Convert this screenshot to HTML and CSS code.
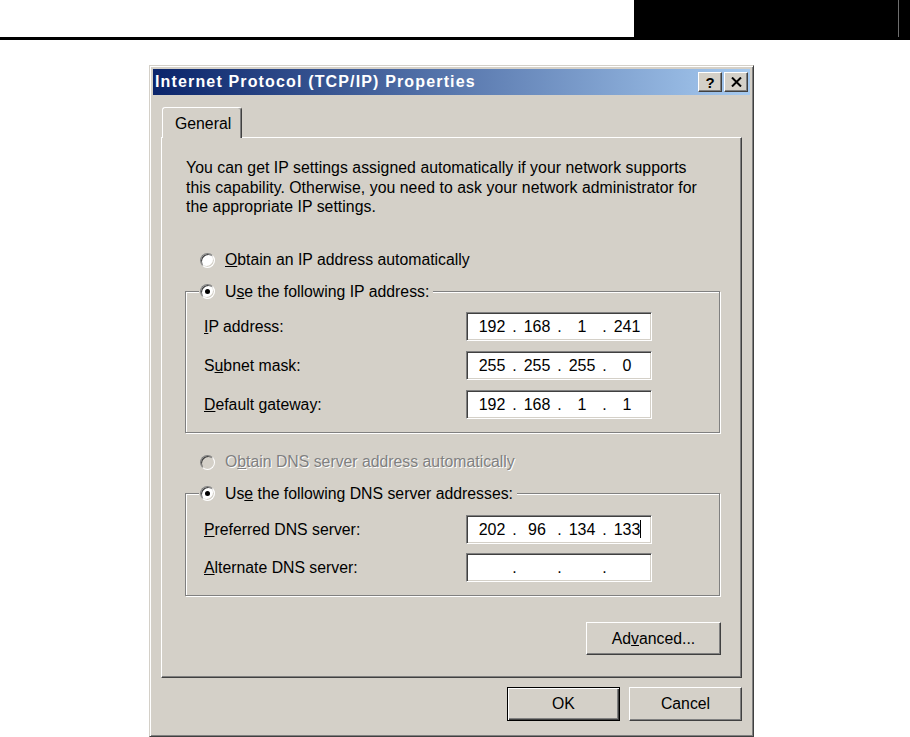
FILE: index.html
```html
<!DOCTYPE html>
<html lang="en">
<head>
  <meta charset="UTF-8">
  <title>Internet Protocol (TCP/IP) Properties</title>
  <link rel="stylesheet" href="styles.css">
</head>
<body>
  <div class="page-head">
    <div class="spacer"></div>
    <div class="head-mark"></div>
  </div>
  <div class="page-rule"></div>

  <div class="window">
    <div class="titlebar">
      <span class="title">Internet Protocol (TCP/IP) Properties</span>
      <div class="cap-btns">
        <span class="cap-btn help">?</span>
        <span class="cap-btn">
          <svg width="11" height="10" viewBox="0 0 11 10"><path d="M1 0.5 L10 9.5 M10 0.5 L1 9.5" stroke="#000" stroke-width="2"/></svg>
        </span>
      </div>
    </div>

    <div class="client">
      <div class="tabs">
        <div class="tab">General</div>
      </div>

      <div class="panel">
        <p class="intro">You can get IP settings assigned automatically if your network supports<br>this capability. Otherwise, you need to ask your network administrator for<br>the appropriate IP settings.</p>

        <div class="option">
          <span class="radio"></span>
          <span><u>O</u>btain an IP address automatically</span>
        </div>

        <fieldset class="group">
          <legend>
            <span class="radio checked"></span>
            <span>U<u>s</u>e the following IP address:</span>
          </legend>
          <div class="fields">
            <div class="field">
              <label><u>I</u>P address:</label>
              <div class="ipbox"><span class="oct">192</span><span class="dot">.</span><span class="oct">168</span><span class="dot">.</span><span class="oct">1</span><span class="dot">.</span><span class="oct">241</span></div>
            </div>
            <div class="field">
              <label>S<u>u</u>bnet mask:</label>
              <div class="ipbox"><span class="oct">255</span><span class="dot">.</span><span class="oct">255</span><span class="dot">.</span><span class="oct">255</span><span class="dot">.</span><span class="oct">0</span></div>
            </div>
            <div class="field">
              <label><u>D</u>efault gateway:</label>
              <div class="ipbox"><span class="oct">192</span><span class="dot">.</span><span class="oct">168</span><span class="dot">.</span><span class="oct">1</span><span class="dot">.</span><span class="oct">1</span></div>
            </div>
          </div>
        </fieldset>

        <div class="option disabled">
          <span class="radio"></span>
          <span>O<u>b</u>tain DNS server address automatically</span>
        </div>

        <fieldset class="group dns">
          <legend>
            <span class="radio checked"></span>
            <span>Us<u>e</u> the following DNS server addresses:</span>
          </legend>
          <div class="fields">
            <div class="field">
              <label><u>P</u>referred DNS server:</label>
              <div class="ipbox"><span class="oct">202</span><span class="dot">.</span><span class="oct">96</span><span class="dot">.</span><span class="oct">134</span><span class="dot">.</span><span class="oct">133<span class="caret"></span></span></div>
            </div>
            <div class="field">
              <label><u>A</u>lternate DNS server:</label>
              <div class="ipbox"><span class="oct"></span><span class="dot">.</span><span class="oct"></span><span class="dot">.</span><span class="oct"></span><span class="dot">.</span><span class="oct"></span></div>
            </div>
          </div>
        </fieldset>

        <div class="adv-row">
          <button type="button" class="btn adv">Ad<u>v</u>anced...</button>
        </div>
      </div>

      <div class="dlg-buttons">
        <button type="button" class="btn default">OK</button>
        <button type="button" class="btn">Cancel</button>
      </div>
    </div>
  </div>
</body>
</html>
```

FILE: styles.css
```css
html, body { margin: 0; height: 100%; overflow: hidden; }
body { background: #fff; color: #000; font-family: "Liberation Sans", Arial, sans-serif; font-size: 15.8px; }

.page-head { display: flex; height: 37px; }
.page-head .spacer { flex: 1; }
.head-mark { width: 276px; background: linear-gradient(to right, #000 264px, #6e6e6e 264px, #6e6e6e 265px, #000 265px); }
.page-rule { height: 3px; background: #000; }

.window { width: 605px; height: 672px; box-sizing: border-box; margin: 25px 0 0 149px; padding: 3px; background: #d4d0c8; border: 1px solid; border-color: #d4d0c8 #404040 #404040 #d4d0c8; box-shadow: inset 1px 1px #fff, inset -1px -1px #808080; }

.titlebar { display: flex; align-items: center; height: 26px; padding: 0 2px; background: linear-gradient(to right, #0a246a, #a6caf0); }
.title { color: #fff; font-weight: bold; font-size: 16px; letter-spacing: 1.15px; }
.cap-btns { margin-left: auto; display: flex; gap: 2px; }
.cap-btn { width: 24px; height: 20px; box-sizing: border-box; display: flex; align-items: center; justify-content: center; background: #d4d0c8; border: 1px solid; border-color: #fff #404040 #404040 #fff; box-shadow: inset -1px -1px #808080; }
.cap-btn.help { font-weight: bold; font-size: 15px; line-height: 1; }

.client { padding: 12px 8px 0; }

.tabs { display: flex; padding-left: 1px; }
.tab { position: relative; z-index: 1; height: 31px; box-sizing: border-box; margin-bottom: -1px; padding: 7px 10px 0 12px; background: #d4d0c8; border: 1px solid; border-bottom: none; border-color: #fff #404040 transparent #fff; border-radius: 3px 3px 0 0; box-shadow: inset -1px 0 #808080; }

.panel { height: 541px; box-sizing: border-box; padding: 20px 21px 0 23px; border: 1px solid; border-color: #fff #404040 #404040 #fff; box-shadow: inset -1px -1px #808080; }

.intro { margin: 0 0 0 1px; line-height: 19.5px; letter-spacing: 0.05px; }

.option { display: flex; align-items: center; gap: 10px; height: 20px; padding-left: 15px; margin-top: 33.5px; }
.option.disabled { margin-top: 19px; color: #808080; text-shadow: 1px 1px #fff; }

.radio { width: 15px; height: 15px; box-sizing: border-box; flex: none; border-radius: 50%; background: #fff; border: 1px solid; border-color: #808080 #fff #fff #808080; box-shadow: inset 1px 1px #404040, inset -1px -1px #d4d0c8; display: flex; align-items: center; justify-content: center; }
.radio.checked::after { content: ""; width: 5px; height: 5px; border-radius: 50%; background: #000; }
.disabled .radio { background: #d4d0c8; }

.group { margin: 11px 0 0; padding: 0; min-width: 0; border: 1px solid #808080; box-shadow: inset 1px 1px #fff, 1px 1px #fff; }
.group legend { display: flex; align-items: center; gap: 10px; height: 21px; box-sizing: border-box; margin-left: 13px; padding: 0 4px 0 1px; background: #d4d0c8; }
.fields { display: flex; flex-direction: column; gap: 10px; padding: 10px 0 13px 18px; }
.dns .fields { gap: 9px; padding-top: 11px; }

.field { display: flex; align-items: center; }
.field label { width: 262px; }

.ipbox { display: flex; align-items: center; width: 186px; height: 29px; box-sizing: border-box; padding-left: 7px; background: #fff; border: 1px solid; border-color: #808080 #fff #fff #808080; box-shadow: inset 1px 1px #404040, inset -1px -1px #d4d0c8; font-size: 16px; }
.oct { width: 36px; text-align: center; }
.dot { width: 9px; text-align: center; }
.caret { display: inline-block; width: 1px; height: 18px; margin-right: -1px; vertical-align: -3px; background: #000; }

.btn { font: inherit; color: #000; background: #d4d0c8; height: 34px; box-sizing: border-box; padding: 0; border: 1px solid; border-color: #fff #404040 #404040 #fff; box-shadow: inset -1px -1px #808080; }
.btn.default { border-color: #000; box-shadow: inset 1px 1px #fff, inset -1px -1px #404040, inset -2px -2px #808080; }

.adv-row { display: flex; justify-content: flex-end; margin: 26px -1px 0 0; }
.btn.adv { width: 135px; height: 33px; }

.dlg-buttons { display: flex; justify-content: flex-end; gap: 9px; margin-top: 9px; }
.dlg-buttons .btn { width: 113px; }
```
